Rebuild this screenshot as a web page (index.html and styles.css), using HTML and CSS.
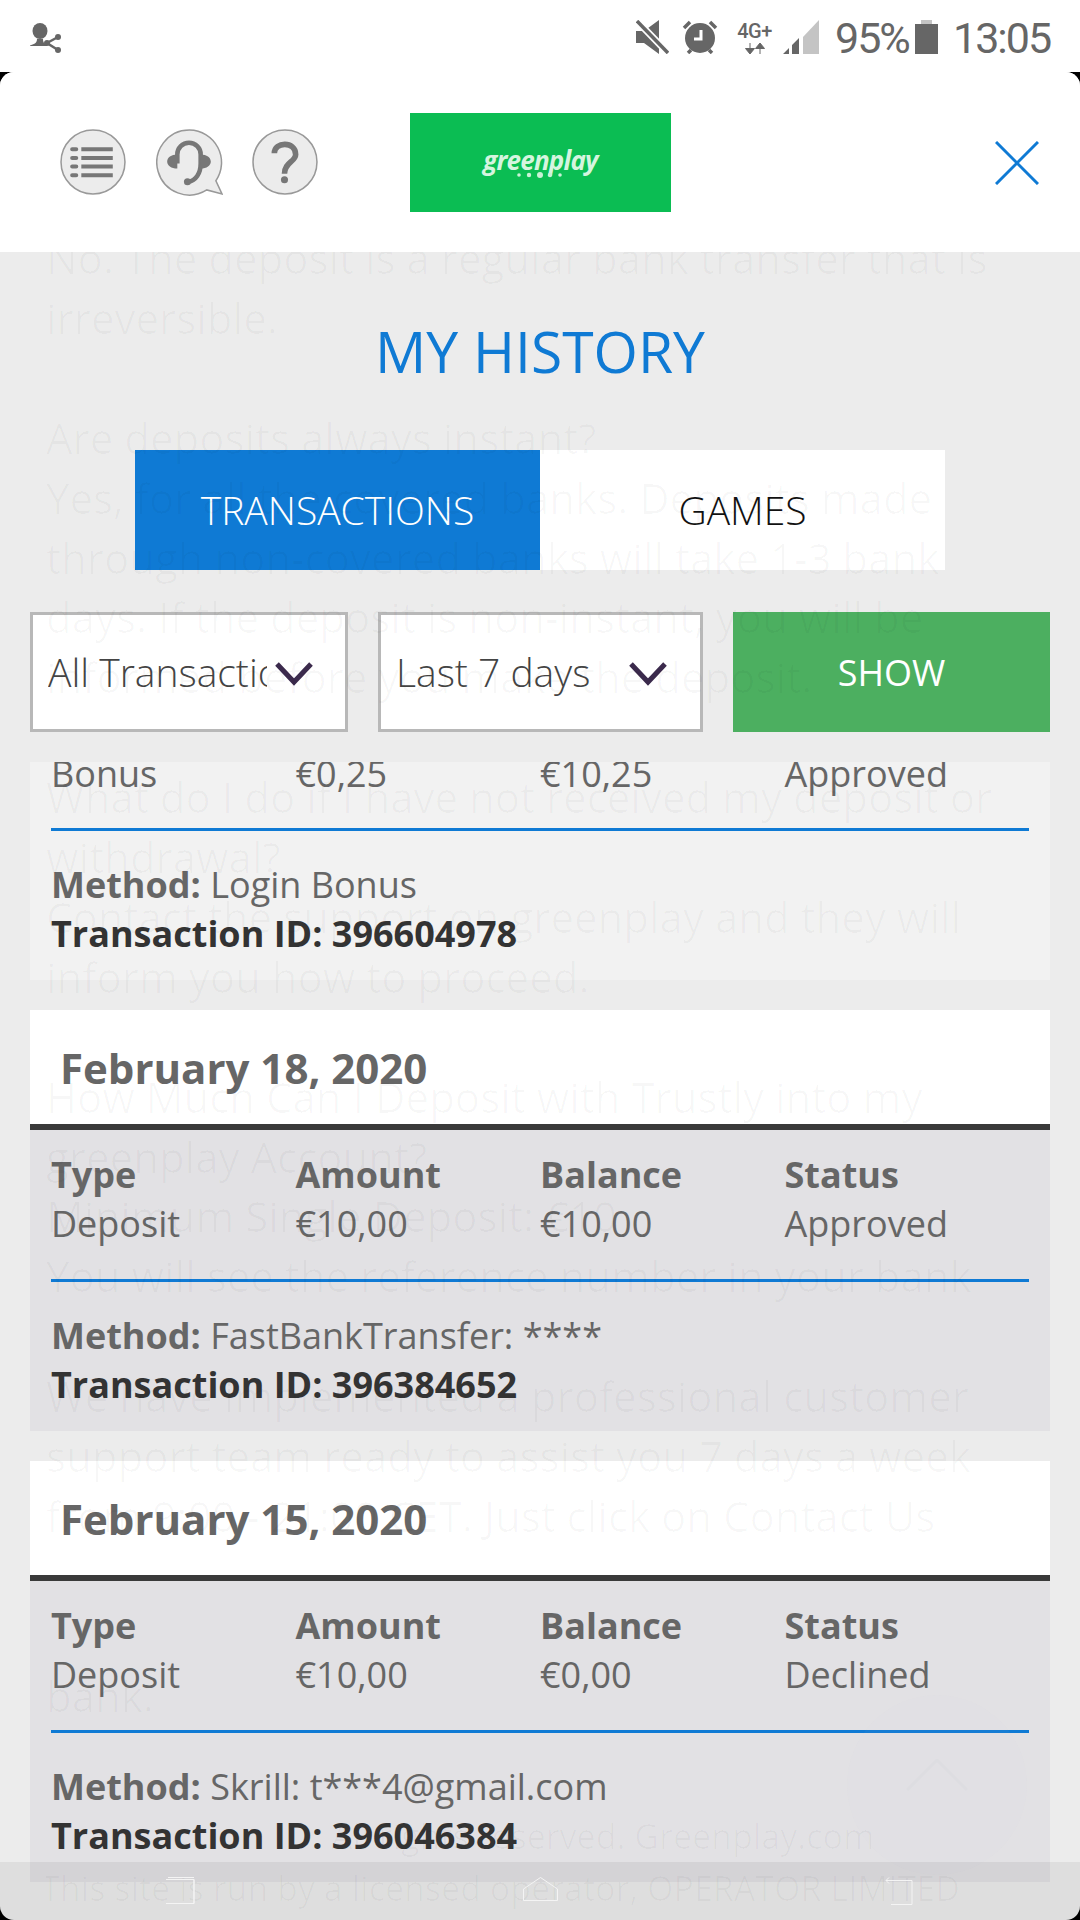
FILE: index.html
```html
<!doctype html>
<html>

<head>
  <meta charset="utf-8">
  <title>My History</title>
  <link rel="stylesheet" href="styles.css">
</head>

<body>

  <div class="status-bar">
    <svg class="status-contact" width="33" height="30" viewBox="0 0 33 30">
      <ellipse cx="10" cy="8" rx="7.500" ry="8" fill="#666"/>
      <path d="M-1 23c4-2 8-2 8-7h6c0 4 2 5 4 6v1z" fill="#666"/>
      <path d="M28 14l-11 6 11 7" fill="none" stroke="#666" stroke-width="2.500"/>
      <circle cx="28" cy="14" r="3" fill="#666"/>
      <circle cx="17" cy="20" r="3" fill="#666"/>
      <circle cx="28" cy="27" r="3" fill="#666"/>
    </svg>
    <div class="status-right">
      <svg class="status-mute" width="33" height="34" viewBox="0 0 33 34">
        <path d="M0 11h8l15-11v34L8 23H0z" fill="#666"/>
        <path d="M1 1l31 32" stroke="#fff" stroke-width="7"/>
        <path d="M1 1l31 32" stroke="#666" stroke-width="3.500"/>
      </svg>
      <svg class="status-alarm" width="36" height="34" viewBox="0 0 36 34">
        <circle cx="18" cy="18" r="15" fill="#666"/>
        <path d="M19 10v9h-7" fill="none" stroke="#fff" stroke-width="3"/>
        <path d="M2 8l6-6M34 8l-6-6M6 33l3-3M30 33l-3-3" stroke="#666" stroke-width="3.500"/>
      </svg>
      <div class="status-net">
        <span class="status-net-label">4G+</span>
        <svg width="22" height="11" viewBox="0 0 22 11">
          <path d="M6 0v7M1.500 5.500h9L6 11z" stroke="#666" fill="#666"/>
          <path d="M16 11V4M11.500 5.500h9L16 0z" stroke="#666" fill="#666"/>
        </svg>
      </div>
      <svg class="status-signal" width="36" height="34" viewBox="0 0 36 34">
        <path d="M36 0v34H20V17z" fill="#c4c4c4"/>
        <path d="M0 34l6-6v6zM9 25l7-7v16H9z" fill="#666"/>
      </svg>
      <span class="status-text status-battery-text">95%</span>
      <svg class="status-battery" width="23" height="34" viewBox="0 0 23 34">
        <path d="M6 0h11v4H6z" fill="#c4c4c4"/>
        <path d="M0 4h23v30H0z" fill="#666"/>
      </svg>
      <span class="status-text status-time">13:05</span>
    </div>
  </div>

  <div class="sheet">

    <div class="header">
      <div class="header-icons">
        <svg width="67" height="67" viewBox="0 0 66 66">
          <circle cx="32.500" cy="32.500" r="31.500" fill="#ececec" stroke="#999" stroke-width="1.500"/>
          <path d="M21 20h31M21 28.500h31M21 37h31M21 45.500h31" stroke="#777" stroke-width="4"/>
          <path d="M12 20h4M12 28.500h4M12 37h4M12 45.500h4" stroke="#777" stroke-width="4" stroke-linecap="round"/>
        </svg>
        <svg width="67" height="67" viewBox="0 0 66 66">
          <path d="M33 1a32 32 0 1 0 17 59l15 4-6-13A32 32 0 0 0 33 1z" fill="#ececec" stroke="#999" stroke-width="1.500"/>
          <path d="M21 34v-9a11.500 11.500 0 0 1 23 0v9c0 10-5 17-12 18" fill="none" stroke="#777" stroke-width="4.500"/>
          <path d="M21 25c-6 0-10 3-10 7s4 7 10 7zM44 25c6 0 10 3 10 7s-4 7-10 7z" fill="#777"/>
          <circle cx="31" cy="52" r="3.500" fill="#777"/>
        </svg>
        <svg width="67" height="67" viewBox="0 0 66 66">
          <circle cx="32.500" cy="32.500" r="31.500" fill="#ececec" stroke="#999" stroke-width="1.500"/>
          <path d="M22 24c0-12 21-12 21 1 0 7-11 8-11 19" fill="none" stroke="#777" stroke-width="5.500"/>
          <circle cx="32" cy="50" r="3.500" fill="#777"/>
        </svg>
      </div>
      <div class="logo">
        <span class="logo-text">greenplay</span>
        <svg class="logo-dots" width="50" height="8" viewBox="0 0 50 8">
          <circle cx="3" cy="4" r="1.800" fill="#c9f2d6"/>
          <circle cx="13" cy="4" r="2.200" fill="#c9f2d6"/>
          <circle cx="24" cy="4" r="3" fill="#c9f2d6"/>
          <circle cx="34" cy="4" r="2.200" fill="#c9f2d6"/>
          <circle cx="44" cy="4" r="1.800" fill="#c9f2d6"/>
        </svg>
      </div>
      <svg class="close" width="44" height="44" viewBox="0 0 44 44">
        <path d="M1 1l42 42M43 1L1 43" stroke="#0f7ad4" stroke-width="3"/>
      </svg>
    </div>

    <div class="content">

      <h1 class="title">MY HISTORY</h1>

      <div class="tabs">
        <div class="tab tab-active">TRANSACTIONS</div>
        <div class="tab">GAMES</div>
      </div>

      <div class="filters">
        <div class="select select-type">
          <span class="select-text">All Transactions</span>
          <svg width="40" height="25" viewBox="0 0 40 25"><path d="M3 3l17 18L37 3" fill="none" stroke="#3b2a4c" stroke-width="5"/></svg>
        </div>
        <div class="select select-range">
          <span class="select-text">Last 7 days</span>
          <svg width="40" height="25" viewBox="0 0 40 25"><path d="M3 3l17 18L37 3" fill="none" stroke="#3b2a4c" stroke-width="5"/></svg>
        </div>
        <div class="show-btn">SHOW</div>
      </div>

      <div class="list">

        <div class="card">
          <div class="card-body card-body-first">
            <div class="row row-first">
              <span>Bonus</span><span>€0,25</span><span>€10,25</span><span>Approved</span>
            </div>
            <div class="divider"></div>
            <div class="method"><b>Method:</b> Login Bonus</div>
            <div class="txn">Transaction ID: 396604978</div>
          </div>
        </div>

        <div class="card">
          <div class="card-date">February 18, 2020</div>
          <div class="card-body">
            <div class="row row-head">
              <span>Type</span><span>Amount</span><span>Balance</span><span>Status</span>
            </div>
            <div class="row">
              <span>Deposit</span><span>€10,00</span><span>€10,00</span><span>Approved</span>
            </div>
            <div class="divider"></div>
            <div class="method"><b>Method:</b> FastBankTransfer: ****</div>
            <div class="txn">Transaction ID: 396384652</div>
          </div>
        </div>

        <div class="card">
          <div class="card-date">February 15, 2020</div>
          <div class="card-body">
            <div class="row row-head">
              <span>Type</span><span>Amount</span><span>Balance</span><span>Status</span>
            </div>
            <div class="row">
              <span>Deposit</span><span>€10,00</span><span>€0,00</span><span>Declined</span>
            </div>
            <div class="divider"></div>
            <div class="method"><b>Method:</b> Skrill: t***4@gmail.com</div>
            <div class="txn">Transaction ID: 396046384</div>
          </div>
        </div>

      </div>

      <!-- the faq page fading out behind the overlay -->
      <div class="ghost">
        <p>No. The deposit is a regular bank transfer that is<br>irreversible.</p>
        <p>Are deposits always instant?<br>Yes, for all the covered banks. Deposits made<br>through non-covered banks will take 1-3 bank<br>days. If the deposit is non-instant, you will be<br>informed before you make the deposit.</p>
        <p>What do I do if I have not received my deposit or<br>withdrawal?<br>Contact the support on greenplay and they will<br>inform you how to proceed.</p>
        <p>How Much Can I Deposit with Trustly into my<br>greenplay Account?<br>Minimum Single Deposit: €10<br>You will see the reference number in your bank</p>
        <p>We have implemented a professional customer<br>support team ready to assist you 7 days a week<br>from 9:00 - 21:00 CET. Just click on Contact Us</p>
        <p class="ghost-gap">bank.</p>
        <p class="ghost-foot"><span class="ghost-foot-top">All rights reserved. Greenplay.com</span><br>This site is run by a licensed operator, OPERATOR LIMITED</p>
      </div>

      <div class="to-top">
        <svg width="62" height="32" viewBox="0 0 62 32"><path d="M1 31L31 1l30 30" fill="none" stroke="#dddde1" stroke-width="3"/></svg>
      </div>

    </div>

    <div class="nav-bar">
      <svg width="30" height="27" viewBox="0 0 30 27">
        <path d="M1 2.500h28v24H1M29 2.500v24M3 .500h26" fill="none" stroke="#f4f4f4" stroke-width="1"/>
      </svg>
      <svg width="35" height="24" viewBox="0 0 35 24">
        <path d="M.500 23.500V12L17.500 .500 34.500 12v11.500z" fill="none" stroke="#f4f4f4" stroke-width="1"/>
      </svg>
      <svg width="30" height="28" viewBox="0 0 30 28">
        <path d="M1 3.500h26v24M1 3.500l3-3M1 3.500l3 3M6 27.500h21" fill="none" stroke="#f4f4f4" stroke-width="1"/>
      </svg>
    </div>

  </div>

</body>

</html>
```

FILE: styles.css
```css
* {
  box-sizing: border-box;
}

body {
  margin: 0;
  width: 1080px;
  height: 1920px;
  overflow: hidden;
  background: #000;
  display: flex;
  flex-direction: column;
  font-family: "Open Sans", sans-serif;
  color: #666;
}

/* status bar */

.status-bar {
  height: 72px;
  flex: none;
  background: #fff;
  display: flex;
  justify-content: space-between;
  padding: 20px 31px 0 30px;
}

.status-contact {
  margin-top: 3px;
}

.status-right {
  display: flex;
  align-items: flex-start;
}

.status-alarm {
  margin-left: 13px;
}

.status-net {
  margin-left: 18px;
  width: 37px;
  display: flex;
  flex-direction: column;
  align-items: center;
  gap: 3px;
}

.status-net-label {
  margin-top: 2px;
  font-family: Roboto, sans-serif;
  font-size: 20px;
  line-height: 18px;
  font-weight: 500;
  letter-spacing: -0.500px;
}

.status-signal {
  margin-left: 10px;
}

.status-text {
  font-family: Roboto, sans-serif;
  font-size: 43px;
  line-height: 36px;
  letter-spacing: -2px;
}

.status-battery-text {
  margin-left: 16px;
  width: 70px;
}

.status-battery {
  margin-left: 10px;
}

.status-time {
  margin-left: 15px;
  width: 96px;
}

/* sheet */

.sheet {
  flex: 1;
  position: relative;
  display: flex;
  flex-direction: column;
  overflow: hidden;
  border-radius: 14px;
  background: #ececec;
}

.header {
  height: 180px;
  flex: none;
  background: #fff;
  display: flex;
  align-items: center;
  padding: 0 41px 0 60px;
}

.header-icons {
  display: flex;
  gap: 29px;
}

.logo {
  width: 261px;
  height: 99px;
  margin-left: 91px;
  background: #0bbd53;
  display: flex;
  flex-direction: column;
  align-items: center;
  justify-content: center;
}

.logo-text {
  font-size: 26px;
  line-height: 28px;
  font-weight: 700;
  font-style: italic;
  letter-spacing: -0.800px;
  color: #d5f5df;
}

.logo-dots {
  margin-top: -3px;
}

.close {
  margin-left: auto;
  margin-top: 2px;
}

.content {
  flex: 1;
  position: relative;
  display: flex;
  flex-direction: column;
  min-height: 0;
}

.title {
  margin: 61px 0 0;
  height: 137px;
  font-size: 57px;
  line-height: 76px;
  font-weight: 400;
  text-align: center;
  color: #0f7ad4;
}

.tabs {
  height: 120px;
  flex: none;
  margin: 0 135px;
  display: flex;
}

.tab {
  flex: 1;
  display: flex;
  align-items: center;
  justify-content: center;
  padding-bottom: 2px;
  background: #fff;
  color: #111;
  font-size: 39px;
  font-weight: 300;
}

.tab-active {
  background: #0f7ad4;
  color: #fff;
}

.filters {
  height: 120px;
  flex: none;
  margin: 42px 30px 30px;
  display: flex;
  gap: 30px;
}

.select {
  height: 120px;
  border: 3px solid #b8b8b8;
  background: #fff;
  display: flex;
  align-items: center;
  padding-left: 15px;
  color: #444;
  font-size: 39px;
  font-weight: 300;
}

.select-type {
  width: 318px;
}

.select-range {
  width: 325px;
}

.select-text {
  margin-top: -2px;
  white-space: nowrap;
  overflow: hidden;
}

.select-type .select-text {
  width: 219px;
  flex: none;
}

.select-type svg {
  margin-left: 7px;
  margin-top: 2px;
  flex: none;
}

.select-range svg {
  margin-left: auto;
  margin-right: 32px;
  margin-top: 2px;
  flex: none;
}

.show-btn {
  flex: 1;
  display: flex;
  align-items: center;
  justify-content: center;
  background: #4caf60;
  color: #fff;
  font-size: 36px;
}

/* history list */

.list {
  flex: 1;
  min-height: 0;
  overflow: hidden;
  margin: 0 30px;
  display: flex;
  flex-direction: column;
  gap: 30px;
}

.card {
  flex: none;
}

.card-date {
  height: 120px;
  padding-left: 30px;
  border-bottom: 6px solid #3a3a3a;
  background: #fff;
  font-size: 42px;
  font-weight: 700;
  line-height: 116px;
}

.card-body {
  padding: 20px 21px 22px;
  background: #e2e1e4;
  font-size: 36px;
  line-height: 49px;
}

.card-body-first {
  padding-top: 0;
  background: #f2f2f2;
}

.row {
  display: grid;
  grid-template-columns: repeat(4, 1fr);
}

.row-first {
  margin-top: -13px;
  margin-bottom: -1px;
}

.row-head {
  font-weight: 700;
}

.divider {
  height: 3px;
  margin: 31px 0 29px;
  background: #0f7ad4;
}

.method b {
  font-weight: 700;
}

.txn {
  font-weight: 700;
  color: #333;
}

/* faded page on top of everything */

.ghost {
  position: absolute;
  top: 0;
  left: 46px;
  right: 0;
  bottom: 0;
  overflow: hidden;
  pointer-events: none;
  color: rgba(0, 0, 0, 0.026);
  font-size: 42px;
  line-height: 59.870px;
  white-space: nowrap;
}

.ghost p {
  margin: 0 0 60px;
}

.ghost p:first-child {
  margin-top: -24px;
}

.ghost-gap {
  padding-top: 60px;
}

.ghost p.ghost-foot {
  margin: 84px 0 0 -5px;
  font-size: 34px;
  line-height: 52px;
}

.ghost-foot-top {
  margin-left: 290px;
}

.to-top {
  position: absolute;
  left: 847px;
  top: 1443px;
  width: 180px;
  height: 180px;
  border-radius: 50%;
  background: rgba(210, 215, 235, 0.04);
  display: flex;
  align-items: center;
  justify-content: center;
  padding-bottom: 20px;
}

.nav-bar {
  position: absolute;
  left: 0;
  right: 0;
  bottom: 0;
  height: 58px;
  background: rgba(0, 0, 0, 0.06);
  display: flex;
  justify-content: space-between;
  padding: 15px 165px 0;
  align-items: flex-start;
}
```
